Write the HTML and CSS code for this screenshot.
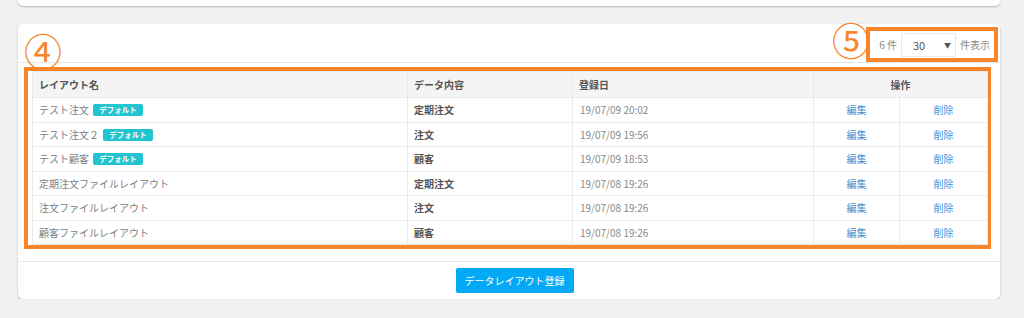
FILE: index.html
```html
<!DOCTYPE html>
<html lang="ja">
<head>
    <meta charset="UTF-8">
    <meta name="viewport" content="width=device-width, initial-scale=1.0">
    <title>データレイアウト一覧</title>
    <link rel="stylesheet" href="styles.css">
</head>
<body>
    <div class="card card-top"></div>

    <div class="card">
        <span class="mark mark-4">④</span>
        <span class="mark mark-5">⑤</span>
        <div class="card-header">
            <div class="per-page">
                <span>6 件</span>
                <div class="select"><span>30</span><span class="arrow">▼</span></div>
                <span>件表示</span>
            </div>
        </div>

        <div class="card-body">
            <div class="table-box">
                <table class="list">
                    <colgroup>
                        <col style="width:375px">
                        <col style="width:165px">
                        <col style="width:241px">
                        <col style="width:86px">
                        <col style="width:88px">
                    </colgroup>
                    <thead>
                        <tr>
                            <th>レイアウト名</th>
                            <th>データ内容</th>
                            <th>登録日</th>
                            <th class="center" colspan="2">操作</th>
                        </tr>
                    </thead>
                    <tbody>
                        <tr>
                            <td>テスト注文 <span class="badge">デフォルト</span></td>
                            <td class="kind">定期注文</td>
                            <td class="date">19/07/09 20:02</td>
                            <td class="center"><a href="#">編集</a></td>
                            <td class="center"><a href="#">削除</a></td>
                        </tr>
                        <tr>
                            <td>テスト注文２ <span class="badge">デフォルト</span></td>
                            <td class="kind">注文</td>
                            <td class="date">19/07/09 19:56</td>
                            <td class="center"><a href="#">編集</a></td>
                            <td class="center"><a href="#">削除</a></td>
                        </tr>
                        <tr>
                            <td>テスト顧客 <span class="badge">デフォルト</span></td>
                            <td class="kind">顧客</td>
                            <td class="date">19/07/09 18:53</td>
                            <td class="center"><a href="#">編集</a></td>
                            <td class="center"><a href="#">削除</a></td>
                        </tr>
                        <tr>
                            <td>定期注文ファイルレイアウト</td>
                            <td class="kind">定期注文</td>
                            <td class="date">19/07/08 19:26</td>
                            <td class="center"><a href="#">編集</a></td>
                            <td class="center"><a href="#">削除</a></td>
                        </tr>
                        <tr>
                            <td>注文ファイルレイアウト</td>
                            <td class="kind">注文</td>
                            <td class="date">19/07/08 19:26</td>
                            <td class="center"><a href="#">編集</a></td>
                            <td class="center"><a href="#">削除</a></td>
                        </tr>
                        <tr>
                            <td>顧客ファイルレイアウト</td>
                            <td class="kind">顧客</td>
                            <td class="date">19/07/08 19:26</td>
                            <td class="center"><a href="#">編集</a></td>
                            <td class="center"><a href="#">削除</a></td>
                        </tr>
                    </tbody>
                </table>
            </div>
        </div>

        <div class="card-footer">
            <button class="btn-primary">データレイアウト登録</button>
        </div>
    </div>
</body>
</html>
```

FILE: styles.css
```css
body {
    margin: 0;
    padding: 0 24px 0 18px;
    background-color: #f1f1f1;
    font-family: "Noto Sans CJK JP", "Noto Sans", sans-serif;
    font-size: 10px;
    color: #808080;
}
.card {
    position: relative;
    background: #fff;
    border-radius: 5px;
    box-shadow: 0 1px 2px rgba(0,0,0,0.25);
}
.card-top {
    height: 6px;
    border-radius: 0 0 5px 5px;
    margin-bottom: 18px;
}
.card-header {
    height: 39px;
    box-sizing: border-box;
    padding: 3px 2px 0 0;
    border-bottom: 1px solid #e6e6e6;
    display: flex;
    justify-content: flex-end;
    align-items: flex-start;
}
/* 注釈の丸数字 */
.mark {
    position: absolute;
    z-index: 1;
    color: #f8852a;
    font-size: 38px;
    line-height: 38px;
    font-family: "Noto Sans CJK JP", sans-serif;
}
.mark-5 {
    top: -4px;
    right: 130px;
}
.mark-4 {
    top: 7px;
    left: 6px;
}
.per-page {
    height: 35px;
    box-sizing: border-box;
    border: 4px solid #f8852a;
    padding: 0 4px 0 9px;
    display: flex;
    align-items: center;
    gap: 4px;
    color: #888;
}
.select {
    width: 55px;
    height: 24px;
    box-sizing: border-box;
    border: 1px solid #e8e8e8;
    display: flex;
    align-items: center;
    justify-content: space-between;
    padding: 0 4px 0 11px;
    color: #555;
    font-size: 11px;
}
.select .arrow {
    font-size: 7px;
    color: #555;
}
.card-body {
    padding: 4px 9px 12px 6px;
    border-bottom: 1px solid #e6e6e6;
}
.table-box {
    border: 4px solid #f8852a;
    padding: 0 0 0 4px;
}
.list {
    border-collapse: collapse;
    table-layout: fixed;
    width: 955px;
}
.list th,
.list td {
    border: 1px solid #ebebeb;
    text-align: left;
    white-space: nowrap;
    padding: 0 6px;
}
.list th {
    height: 25px;
    background: #f4f4f4;
    color: #555;
    font-weight: bold;
}
.list td {
    height: 23.5px;
}
.list .center {
    text-align: center;
}
.list .kind {
    color: #555;
    font-weight: bold;
}
.list .date {
    color: #888;
    padding-left: 7px;
}
.list a {
    color: #4a8fd1;
    text-decoration: none;
}
.badge {
    display: inline-block;
    background: #21c4cf;
    color: #fff;
    font-size: 7.5px;
    font-weight: bold;
    line-height: 12px;
    padding: 0 6px;
    border-radius: 2px;
    margin-left: 2px;
    vertical-align: 1px;
}
.card-footer {
    padding: 6px 0 6px 11px;
    display: flex;
    justify-content: center;
}
.btn-primary {
    height: 25px;
    padding: 0 9px;
    border: none;
    border-radius: 2px;
    background-color: #03a9f4;
    color: #fff;
    font-family: inherit;
    font-size: 10px;
}
```
